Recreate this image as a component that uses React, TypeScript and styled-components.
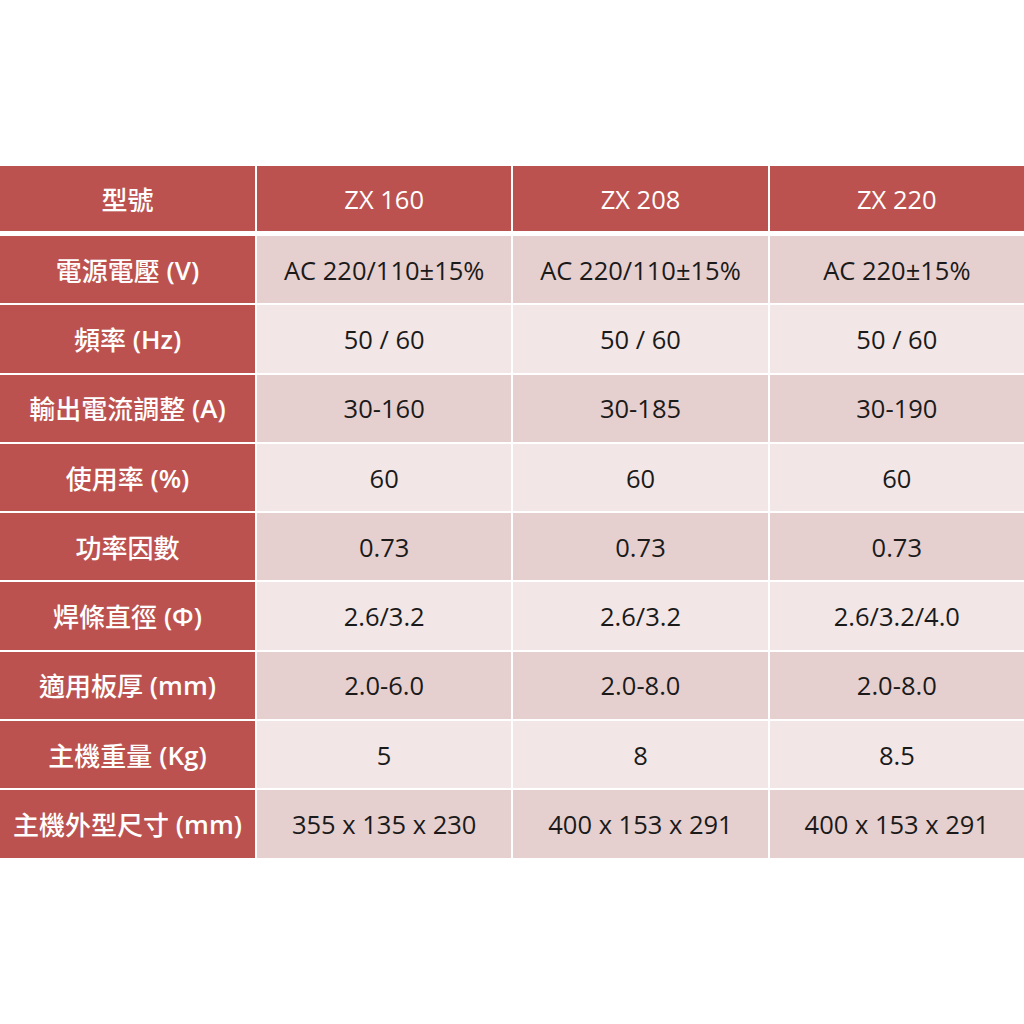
import React from 'react';
import styled, { createGlobalStyle } from 'styled-components';

const GlobalStyle = createGlobalStyle`
  html, body {
    margin: 0;
    padding: 0;
    background: #ffffff;
  }
  body {
    font-family: "Open Sans", "Noto Sans CJK TC", sans-serif;
  }
`;

const Page = styled.div`
  width: 1024px;
  height: 1024px;
  background: #ffffff;
  padding-top: 166px;
  box-sizing: border-box;
`;

const SpecTable = styled.div`
  display: grid;
  grid-template-columns: 255px 1fr 1fr 1fr;
  column-gap: 2px;
  background: #ffffff;
`;

const HeaderRow = styled.div`
  display: contents;
`;

const Row = styled.div`
  display: contents;
`;

const HeadCell = styled.div<{ $label?: boolean }>`
  height: 65px;
  margin-bottom: 5px;
  background: #bc524f;
  color: #ffffff;
  display: flex;
  align-items: center;
  justify-content: center;
  font-size: ${({ $label }) => ($label ? 26 : 25.5)}px;
  font-weight: ${({ $label }) => ($label ? 500 : 400)};
  font-family: "Open Sans", "Noto Sans CJK TC", sans-serif;
`;

const LabelCell = styled.div<{ $last?: boolean }>`
  height: 67.3px;
  margin-bottom: ${({ $last }) => ($last ? 0 : 2)}px;
  background: #bc524f;
  color: #ffffff;
  display: flex;
  align-items: center;
  justify-content: center;
  font-size: 26px;
  font-weight: 500;
  font-family: "Open Sans", "Noto Sans CJK TC", sans-serif;
  white-space: pre;
`;

const Unit = styled.span`
  font-weight: 600;
`;

const ValueCell = styled.div<{ $dark: boolean; $last?: boolean }>`
  height: 67.3px;
  margin-bottom: ${({ $last }) => ($last ? 0 : 2)}px;
  background: ${({ $dark }) => ($dark ? '#e6cfcf' : '#f2e6e6')};
  color: #1a1a1a;
  display: flex;
  align-items: center;
  justify-content: center;
  font-size: 25.5px;
  font-weight: 400;
  font-family: "Open Sans", "Noto Sans CJK TC", sans-serif;
  white-space: nowrap;
`;

const models = ['ZX 160', 'ZX 208', 'ZX 220'];

const specs: { label: string; unit?: string; values: string[] }[] = [
  { label: '電源電壓', unit: '(V)', values: ['AC 220/110±15%', 'AC 220/110±15%', 'AC 220±15%'] },
  { label: '頻率', unit: '(Hz)', values: ['50 / 60', '50 / 60', '50 / 60'] },
  { label: '輸出電流調整', unit: '(A)', values: ['30-160', '30-185', '30-190'] },
  { label: '使用率', unit: '(%)', values: ['60', '60', '60'] },
  { label: '功率因數', values: ['0.73', '0.73', '0.73'] },
  { label: '焊條直徑', unit: '(Φ)', values: ['2.6/3.2', '2.6/3.2', '2.6/3.2/4.0'] },
  { label: '適用板厚', unit: '(mm)', values: ['2.0-6.0', '2.0-8.0', '2.0-8.0'] },
  { label: '主機重量', unit: '(Kg)', values: ['5', '8', '8.5'] },
  { label: '主機外型尺寸', unit: '(mm)', values: ['355 x 135 x 230', '400 x 153 x 291', '400 x 153 x 291'] },
];

export default function App() {
  return (
    <>
      <GlobalStyle />
      <Page>
        <SpecTable>
          <HeaderRow>
            <HeadCell $label>型號</HeadCell>
            {models.map((m) => (
              <HeadCell key={m}>{m}</HeadCell>
            ))}
          </HeaderRow>
          {specs.map((row, i) => {
            const last = i === specs.length - 1;
            return (
              <Row key={row.label}>
                <LabelCell $last={last}>
                  {row.label}
                  {row.unit && <Unit> {row.unit}</Unit>}
                </LabelCell>
                {row.values.map((v, j) => (
                  <ValueCell key={j} $dark={i % 2 === 0} $last={last}>
                    {v}
                  </ValueCell>
                ))}
              </Row>
            );
          })}
        </SpecTable>
      </Page>
    </>
  );
}
